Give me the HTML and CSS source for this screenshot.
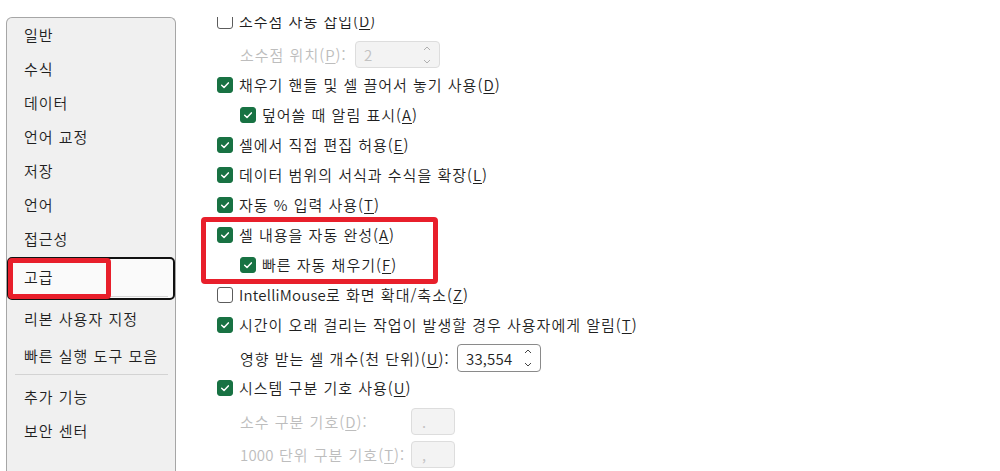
FILE: index.html
```html
<!DOCTYPE html>
<html lang="ko">
<head>
<meta charset="utf-8">
<title>Excel 옵션 - 고급</title>
<link rel="stylesheet" href="styles.css">
</head>
<body>
<div class="window">
  <nav class="sidebar">
    <div class="nav-item">일반</div>
    <div class="nav-item">수식</div>
    <div class="nav-item">데이터</div>
    <div class="nav-item">언어 교정</div>
    <div class="nav-item">저장</div>
    <div class="nav-item">언어</div>
    <div class="nav-item">접근성</div>
    <div class="nav-item selected">고급<span class="mark-nav"></span></div>
    <div class="nav-item after-selected">리본 사용자 지정</div>
    <div class="nav-item gap3">빠른 실행 도구 모음</div>
    <div class="nav-sep"></div>
    <div class="nav-item">추가 기능</div>
    <div class="nav-item">보안 센터</div>
  </nav>

  <main class="content">
    <div class="rows">
      <div class="row"><span class="cb"></span><span class="label">소수점 자동 삽입(<u>D</u>)</span></div>
      <div class="row field first-field indent disabled">
        <span class="flabel w115">소수점 위치(<u>P</u>):</span>
        <span class="spin off w85"><span class="val latin">2</span>
          <span class="arrows">
            <svg width="8" height="5" viewBox="0 0 8 5"><path d="M1 4 L4 1 L7 4" fill="none" stroke="currentColor" stroke-width="1"/></svg>
            <svg width="8" height="5" viewBox="0 0 8 5"><path d="M1 1 L4 4 L7 1" fill="none" stroke="currentColor" stroke-width="1"/></svg>
          </span>
        </span>
      </div>
      <div class="row"><span class="cb on"><svg viewBox="0 0 16 16"><path d="M4.2 8.2 L6.9 10.8 L11.8 5.6" fill="none" stroke="#fff" stroke-width="1.7" stroke-linecap="round" stroke-linejoin="round"/></svg></span><span class="label">채우기 핸들 및 셀 끌어서 놓기 사용(<u>D</u>)</span></div>
      <div class="row indent"><span class="cb on"><svg viewBox="0 0 16 16"><path d="M4.2 8.2 L6.9 10.8 L11.8 5.6" fill="none" stroke="#fff" stroke-width="1.7" stroke-linecap="round" stroke-linejoin="round"/></svg></span><span class="label">덮어쓸 때 알림 표시(<u>A</u>)</span></div>
      <div class="row"><span class="cb on"><svg viewBox="0 0 16 16"><path d="M4.2 8.2 L6.9 10.8 L11.8 5.6" fill="none" stroke="#fff" stroke-width="1.7" stroke-linecap="round" stroke-linejoin="round"/></svg></span><span class="label">셀에서 직접 편집 허용(<u>E</u>)</span></div>
      <div class="row"><span class="cb on"><svg viewBox="0 0 16 16"><path d="M4.2 8.2 L6.9 10.8 L11.8 5.6" fill="none" stroke="#fff" stroke-width="1.7" stroke-linecap="round" stroke-linejoin="round"/></svg></span><span class="label">데이터 범위의 서식과 수식을 확장(<u>L</u>)</span></div>
      <div class="row"><span class="cb on"><svg viewBox="0 0 16 16"><path d="M4.2 8.2 L6.9 10.8 L11.8 5.6" fill="none" stroke="#fff" stroke-width="1.7" stroke-linecap="round" stroke-linejoin="round"/></svg></span><span class="label">자동 % 입력 사용(<u>T</u>)</span></div>
      <div class="group-marked">
        <div class="row"><span class="cb on"><svg viewBox="0 0 16 16"><path d="M4.2 8.2 L6.9 10.8 L11.8 5.6" fill="none" stroke="#fff" stroke-width="1.7" stroke-linecap="round" stroke-linejoin="round"/></svg></span><span class="label">셀 내용을 자동 완성(<u>A</u>)</span></div>
        <div class="row indent"><span class="cb on"><svg viewBox="0 0 16 16"><path d="M4.2 8.2 L6.9 10.8 L11.8 5.6" fill="none" stroke="#fff" stroke-width="1.7" stroke-linecap="round" stroke-linejoin="round"/></svg></span><span class="label">빠른 자동 채우기(<u>F</u>)</span></div>
        <span class="mark-main"></span>
      </div>
      <div class="row"><span class="cb"></span><span class="label"><span class="latin">IntelliMouse</span>로 화면 확대/축소(<u>Z</u>)</span></div>
      <div class="row"><span class="cb on"><svg viewBox="0 0 16 16"><path d="M4.2 8.2 L6.9 10.8 L11.8 5.6" fill="none" stroke="#fff" stroke-width="1.7" stroke-linecap="round" stroke-linejoin="round"/></svg></span><span class="label">시간이 오래 걸리는 작업이 발생할 경우 사용자에게 알림(<u>T</u>)</span></div>
      <div class="row field indent">
        <span class="flabel w217">영향 받는 셀 개수(천 단위)(<u>U</u>):</span>
        <span class="spin w84"><span class="val latin">33,554</span>
          <span class="arrows">
            <svg width="8" height="5" viewBox="0 0 8 5"><path d="M1 4 L4 1 L7 4" fill="none" stroke="currentColor" stroke-width="1"/></svg>
            <svg width="8" height="5" viewBox="0 0 8 5"><path d="M1 1 L4 4 L7 1" fill="none" stroke="currentColor" stroke-width="1"/></svg>
          </span>
        </span>
      </div>
      <div class="row"><span class="cb on"><svg viewBox="0 0 16 16"><path d="M4.2 8.2 L6.9 10.8 L11.8 5.6" fill="none" stroke="#fff" stroke-width="1.7" stroke-linecap="round" stroke-linejoin="round"/></svg></span><span class="label">시스템 구분 기호 사용(<u>U</u>)</span></div>
      <div class="row field indent disabled">
        <span class="flabel w171">소수 구분 기호(<u>D</u>):</span>
        <span class="spin off w44 small"><span class="val">.</span></span>
      </div>
      <div class="row field indent disabled">
        <span class="flabel w171"><span class="latin">1000</span> 단위 구분 기호(<u>T</u>):</span>
        <span class="spin off w44 small"><span class="val">,</span></span>
      </div>
    </div>
  </main>
</div>
</body>
</html>
```

FILE: styles.css
```css
* { box-sizing: border-box; }

html, body {
  margin: 0;
  padding: 0;
  background: #ffffff;
}

body {
  font-family: "Noto Sans CJK KR", "Noto Sans", sans-serif;
  font-size: 15px;
  font-weight: 350;
  letter-spacing: 1px;
  color: #1f1f1f;
}

.latin { letter-spacing: 0.2px; }

.window {
  display: flex;
  align-items: flex-start;
  height: 471px;
  overflow: hidden;
}

/* ---------- sidebar ---------- */
.sidebar {
  margin: 17px 0 0 6px;
  width: 170px;
  height: 480px;
  flex: none;
  background: #f0f0f0;
  border: 1px solid #a6a6a6;
  border-bottom: none;
  border-radius: 6px 6px 0 0;
  display: flex;
  flex-direction: column;
}

.nav-item {
  height: 34px;
  line-height: 34px;
  padding-left: 17px;
  white-space: nowrap;
  color: #1f1f1f;
}

.nav-item.selected {
  position: relative;
  height: 43px;
  margin-top: 1px;
  padding-top: 1px;
  padding-left: 15px;
  background: #fafafa;
  border: 2px solid #111111;
  border-radius: 5px;
}

.nav-item.selected::after {
  content: "";
  position: absolute;
  left: 6px;
  right: 5px;
  bottom: 1px;
  height: 1px;
  background: #d6d6d6;
}

.nav-item.after-selected { margin-top: 2px; }
.nav-item.gap3 { margin-top: 3px; }

.nav-sep {
  height: 1px;
  margin: 1px 7px 5px 8px;
  background: #d3d3d3;
  flex: none;
}

.mark-nav {
  position: absolute;
  left: -1px;
  top: -1px;
  width: 103px;
  height: 41px;
  border: 5px solid #e81f2b;
  border-radius: 4px;
  z-index: 2;
}

/* ---------- content ---------- */
.content {
  flex: 1;
  margin-top: 17px;
  height: 454px;
  overflow: hidden;
  padding-left: 41px;
}

.rows {
  margin-top: -11px;
  display: flex;
  flex-direction: column;
}

.row {
  display: flex;
  align-items: center;
  gap: 6px;
  height: 30px;
  white-space: nowrap;
}

.row.indent { padding-left: 23px; }

.row.field {
  height: 33px;
  padding-top: 3px;
  gap: 0;
}

.row.first-field {
  height: 34px;
  padding-top: 3px;
}

.label { line-height: 30px; }

u {
  text-decoration: underline;
  text-decoration-thickness: 1px;
  text-underline-offset: 2px;
}

.disabled { color: #bdbdbd; }

.cb {
  width: 16px;
  height: 16px;
  flex: none;
  border: 1px solid #5c5c5c;
  border-radius: 3px;
  background: #ffffff;
  display: flex;
}

.cb.on {
  background: #187243;
  border-color: #187243;
}

.cb svg {
  width: 14px;
  height: 14px;
}

.flabel { flex: none; }
.w115 { width: 115px; }
.w217 { width: 217px; }
.w171 { width: 171px; }

.spin {
  flex: none;
  height: 28px;
  display: flex;
  align-items: center;
  justify-content: space-between;
  padding: 0 6px 0 8px;
  border: 1px solid #8a8a8a;
  border-radius: 4px;
  background: #ffffff;
  color: #1f1f1f;
}

.spin.off {
  height: 27px;
  border-color: #dddddd;
  background: #f3f3f3;
  color: #c2c2c2;
}

.w85 { width: 85px; }
.w84 { width: 84px; }
.w44 { width: 44px; }

.spin.small { padding-left: 10px; }

.arrows {
  display: flex;
  flex-direction: column;
  gap: 8px;
  color: #444444;
  padding-right: 2px;
}

.spin.off .arrows { color: #b0b0b0; }

.arrows svg { display: block; }

/* annotation box around auto-complete rows */
.group-marked {
  position: relative;
  display: flex;
  flex-direction: column;
}

.mark-main {
  position: absolute;
  left: -16px;
  top: -3px;
  width: 237px;
  height: 67px;
  border: 5px solid #e81f2b;
  border-radius: 4px;
}
```
